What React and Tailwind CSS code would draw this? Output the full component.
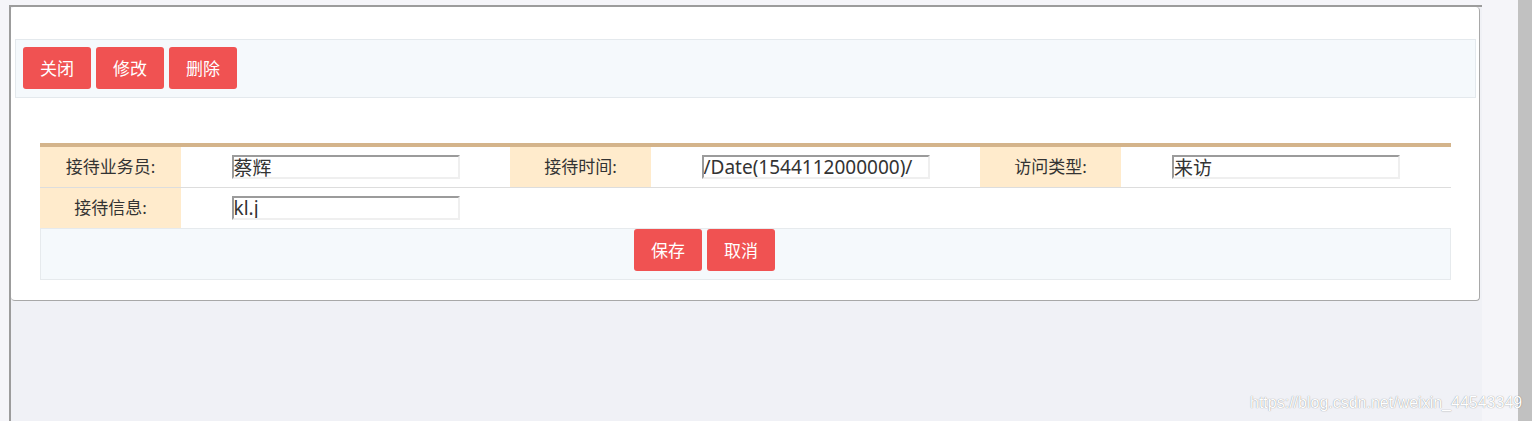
import React from 'react'

const font = { fontFamily: '"Noto Sans", "Noto Sans CJK SC", sans-serif' }

function RedButton({ children }) {
    return (
        <button type="button" className="w-[68px] h-[42px] rounded-[3px] bg-[#f05252] text-white text-[17px] leading-none">
            {children}
        </button>
    )
}

function Field({ label, value }) {
    return (
        <>
            <div className="w-[141px] h-[40px] bg-[#ffebcc] flex items-center justify-center text-[17px] text-[#333]">{label}</div>
            <div className="h-[40px] flex items-center justify-center">
                <input
                    readOnly
                    value={value}
                    className="w-[228px] h-[24px] border-2 border-t-[#9b9b9b] border-l-[#9b9b9b] border-b-[#efefef] border-r-[#efefef] bg-white px-0 text-[19px] text-[#333] leading-none outline-none"
                    style={font}
                />
            </div>
        </>
    )
}

export default function App() {
    return (
        <div className="relative h-[421px] w-[1532px] flex bg-[#f5f5f9] overflow-hidden" style={font}>
            <div className="pl-[9px] pt-[5px]">
                {/* frame */}
                <div className="w-[1473px] h-[420px] border-t-2 border-l-2 border-[#9c9c9c] bg-[#f0f1f6]">
                    <div className="w-[1469px] h-[294px] bg-white border-r border-b border-[#a8a8a8] rounded-[4px] pt-[32px]">
                        <div className="ml-[4px] w-[1461px] h-[59px] border border-[#e4e9ed] bg-[#f5f9fc] pl-[7px] pt-[7px] flex gap-[5px]">
                            <RedButton>关闭</RedButton>
                            <RedButton>修改</RedButton>
                            <RedButton>删除</RedButton>
                        </div>

                        <div className="ml-[29px] mt-[45px] w-[1411px] border-t-4 border-[#d4b48b]">
                            <div className="grid grid-cols-[141px_329px_141px_329px_141px_330px] border-b border-[#dddddd]">
                                <Field label="接待业务员:" value="蔡辉" />
                                <Field label="接待时间:" value="/Date(1544112000000)/" />
                                <Field label="访问类型:" value="来访" />
                            </div>
                            <div className="grid grid-cols-[141px_329px] w-[470px] border-b border-[#dddddd]">
                                <Field label="接待信息:" value="kl.j" />
                            </div>
                            <div className="h-[52px] -mt-px border border-[#e6eaed] bg-[#f5f9fc] pl-[593px] flex items-start gap-[5px]">
                                <RedButton>保存</RedButton>
                                <RedButton>取消</RedButton>
                            </div>
                        </div>
                    </div>
                </div>
            </div>
            <div className="w-[36px]" />
            <div className="w-[14px] h-full bg-[#c1c1c1]" />

            <div
                className="absolute left-[1250px] top-[391px] text-[16px] text-white [text-shadow:0_0_1px_rgba(0,0,0,0.5)] whitespace-nowrap"
                style={{ fontFamily: '"Liberation Sans", Arial, sans-serif' }}
            >
                https://blog.csdn.net/weixin_44543349
            </div>
        </div>
    )
}
